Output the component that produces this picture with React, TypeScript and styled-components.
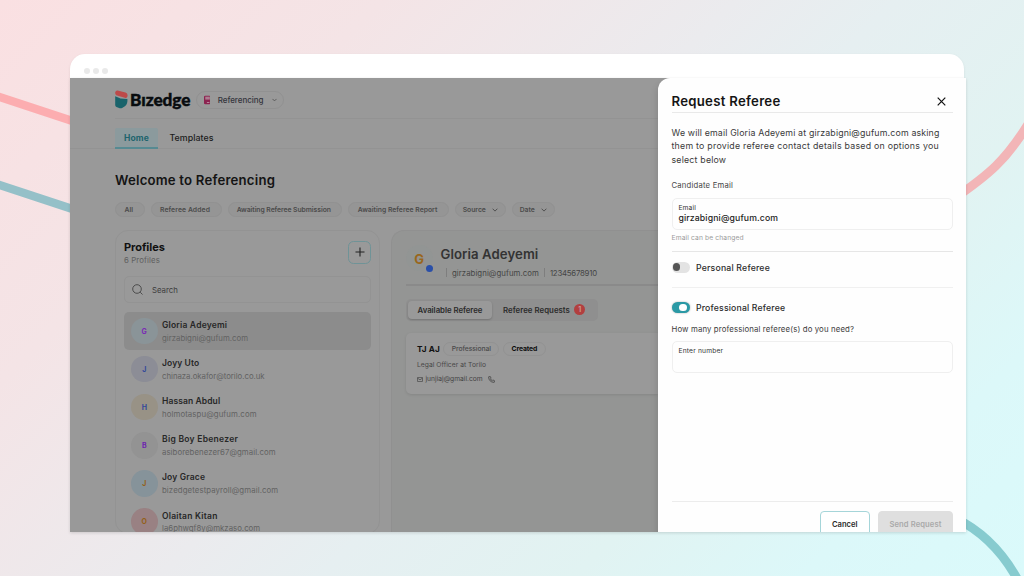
import React from "react";
import styled, { createGlobalStyle, css } from "styled-components";

const GlobalStyle = createGlobalStyle`
  * { box-sizing: border-box; }
  body { margin: 0; overflow: hidden; }
`;

const Page = styled.div`
  position: relative;
  width: 1024px;
  height: 576px;
  overflow: hidden;
  padding: 54px 0 0 70px;
  font-family: Inter, "Liberation Sans", sans-serif;
  background: linear-gradient(135deg, #fae0e2 0%, #f4e4e6 24%, #ebebee 46%, #e6eff1 56%, #e1f3f2 72%, #dcf8f9 86%, #dafafb 100%);
`;

const Ribbons = styled.svg`
  position: absolute;
  inset: 0;
`;

const Browser = styled.div`
  position: relative;
  width: 896px;
`;

const TitleBar = styled.div`
  width: 894px;
  height: 23.5px;
  padding: 14px 0 0 14px;
  display: flex;
  gap: 3px;
  background: #fff;
  border-radius: 15px 15px 0 0;
  box-shadow: 0 1px 3px rgba(0, 0, 0, 0.08);
`;

const WindowDot = styled.i`
  width: 6px;
  height: 6px;
  border-radius: 50%;
  background: #e9e9e9;
`;

const Screen = styled.div`
  position: relative;
  display: flex;
  height: 454px;
  overflow: hidden;
  background: #999;
`;

const Shadow = styled.div`
  box-shadow: 0 1px 3px rgba(0, 0, 0, 0.14);
`;

const Main = styled.main`
  width: 588px;
  overflow: hidden;
`;

interface TextProps {
  $size: number;
  $h: number;
  $weight?: number;
  $color?: string;
  $ls?: number;
}

const Text = styled.div<TextProps>`
  flex: none;
  white-space: nowrap;
  font-size: ${(p) => p.$size}px;
  line-height: ${(p) => p.$h}px;
  font-weight: ${(p) => p.$weight ?? 400};
  color: ${(p) => p.$color ?? "#3a3a3a"};
  letter-spacing: ${(p) => p.$ls ?? 0}px;
`;

const Header = styled.header`
  display: flex;
  align-items: center;
  height: 41px;
  margin-left: 45px;
  padding-top: 4px;
  border-bottom: 1px solid #939393;
`;

const Wordmark = styled.div`
  width: 61.5px;
  margin-left: 2px;
  font-family: Lato, sans-serif;
  font-weight: 900;
  font-size: 17.2px;
  line-height: 20px;
  letter-spacing: -0.05px;
  color: #080c0f;
  -webkit-text-stroke: 0.4px #080c0f;
`;

const AppSwitch = styled.div`
  display: flex;
  align-items: center;
  width: 88px;
  height: 18px;
  margin-left: 4px;
  padding: 0 6px 0 7px;
  border: 1px solid #919191;
  border-radius: 9px;
`;

const AppName = styled(Text)`
  margin: 0 8px 0 7.5px;
`;

const Tabs = styled.nav`
  display: flex;
  height: 30px;
  padding: 9px 0 0 45px;
  border-bottom: 1px solid #939393;
`;

const Tab = styled.div<{ $active?: boolean }>`
  height: 21px;
  ${(p) =>
    p.$active
      ? css`
          width: 43px;
          text-align: center;
          background: #8b9a9d;
          border-bottom: 2px solid #568a92;
          border-radius: 2px 2px 0 0;
        `
      : css`
          padding-left: 11.5px;
        `}
`;

const Content = styled.section`
  padding: 21.5px 0 0 45px;
`;

const Chips = styled.div`
  display: flex;
  gap: 6px;
  margin-top: 12px;
`;

const Chip = styled.div<{ $w: number; $menu?: boolean }>`
  display: flex;
  align-items: center;
  justify-content: center;
  gap: 6.5px;
  width: ${(p) => p.$w}px;
  height: 15px;
  padding-right: ${(p) => (p.$menu ? 0 : 2)}px;
  border-radius: 8px;
  border: 1px solid #919191;
  background: #959595;
`;

const Panels = styled.div`
  display: flex;
  gap: 11px;
  margin-top: 12.5px;
  height: 304px;
`;

const Profiles = styled.div`
  flex: none;
  width: 265px;
  padding: 10px 8px 0 8px;
  border: 1px solid #939393;
  border-radius: 13px;
`;

const ProfilesHead = styled.div`
  display: flex;
  justify-content: space-between;
`;

const AddButton = styled.button`
  display: flex;
  align-items: center;
  justify-content: center;
  width: 23px;
  height: 23px;
  padding: 0;
  background: none;
  border: 1px solid #6f9397;
  border-radius: 5.5px;
`;

const Search = styled.div`
  display: flex;
  align-items: center;
  gap: 9px;
  height: 27px;
  margin: 8.5px 0 9px;
  padding-left: 7px;
  border: 1px solid #939393;
  border-radius: 5px;
`;

const ProfileRow = styled.div<{ $active?: boolean }>`
  display: flex;
  align-items: center;
  gap: 4.5px;
  height: 38.1px;
  padding-left: 7px;
  border-radius: 5px;
  background: ${(p) => (p.$active ? "#8c8c8c" : "transparent")};
`;

const Avatar = styled.div<{ $bg: string; $color: string; $big?: boolean }>`
  position: relative;
  flex: none;
  width: 26.5px;
  height: 26.5px;
  border-radius: 50%;
  text-align: center;
  line-height: 28px;
  font-weight: 700;
  font-size: ${(p) => (p.$big ? 13 : 7)}px;
  background: ${(p) => p.$bg};
  color: ${(p) => p.$color};
`;

const Presence = styled.i`
  position: absolute;
  right: -0.5px;
  bottom: -0.5px;
  width: 7px;
  height: 7px;
  border-radius: 50%;
  background: #2a4fa8;
`;

const RowText = styled.div`
  padding-top: 1px;
`;

const Detail = styled.div`
  flex: 1;
  padding: 14px 0 0 14px;
  border: 1px solid #909090;
  border-right: 0;
  border-radius: 13px 0 0 0;
  background: #949594;
`;

const Person = styled.div`
  display: flex;
  height: 41px;
  border-bottom: 2px solid #8a8a8a;
`;

const PersonInfo = styled.div`
  padding-left: 8px;
`;

const Contacts = styled.div`
  display: flex;
  align-items: center;
  margin: 4px 0 0 5.5px;
`;

const Divider = styled.i`
  width: 1px;
  height: 9px;
  margin-right: 5px;
  background: #7e7e7e;
`;

const Segmented = styled.div`
  display: flex;
  align-items: center;
  width: 191.5px;
  height: 22px;
  margin-top: 13px;
  padding: 0 2px;
  border-radius: 5px;
  background: #8f8f8f;
`;

const Segment = styled.div<{ $active?: boolean }>`
  display: flex;
  align-items: center;
  justify-content: center;
  gap: 4px;
  height: 18px;
  ${(p) =>
    p.$active
      ? css`
          width: 84px;
          border-radius: 4px;
          background: #999;
          box-shadow: 0 1px 2px rgba(0, 0, 0, 0.2);
        `
      : css`
          padding-left: 11px;
        `}
`;

const Count = styled.i`
  width: 11.5px;
  height: 11.5px;
  border-radius: 50%;
  background: #b23f3f;
  color: #cfa0a0;
  font-style: normal;
  font-weight: 600;
  font-size: 7px;
  line-height: 11.5px;
  text-align: center;
`;

const RefereeCard = styled.div`
  height: 61px;
  margin-top: 12.5px;
  padding: 8px 0 0 11px;
  border-radius: 5px 0 0 5px;
  background: #999;
  box-shadow: 0 1px 3px rgba(0, 0, 0, 0.1);
`;

const CardRow = styled.div`
  display: flex;
  align-items: center;
`;

const CardMail = styled(Text)`
  margin: 0 5px 0 2.5px;
`;

const Tag = styled.div<{ $w: number }>`
  display: flex;
  align-items: center;
  justify-content: center;
  width: ${(p) => p.$w}px;
  height: 14px;
  margin-left: 3.5px;
  border: 1px solid #929292;
  border-radius: 7px;
`;

const Drawer = styled.aside`
  width: 308px;
  height: 454px;
  padding: 14px 13px 0 13.5px;
  background: #fefefe;
  border-radius: 12px 0 0 0;
  box-shadow: -2px 4px 6px rgba(0, 0, 0, 0.1);
`;

const DrawerHead = styled.div`
  display: flex;
  justify-content: space-between;
  align-items: center;
  height: 21px;
  padding: 0 7px 1px 0;
  border-bottom: 1px solid #e9e9e9;
`;

const Copy = styled.div`
  margin: 13px 0 13px;
`;

const Field = styled.div<{ $mt: number }>`
  height: 32px;
  margin-top: ${(p) => p.$mt}px;
  padding: 4px 0 0 6px;
  border: 1px solid #efefef;
  border-radius: 5px;
`;

const SwitchRow = styled.div<{ $h: number; $line?: string; $pt: number; $mt?: number }>`
  display: flex;
  gap: 6.5px;
  height: ${(p) => p.$h}px;
  margin-top: ${(p) => p.$mt ?? 0}px;
  padding-top: ${(p) => p.$pt}px;
  border-top: 1px solid ${(p) => p.$line};
`;

const Switch = styled.div<{ $on?: boolean }>`
  display: flex;
  align-items: center;
  justify-content: ${(p) => (p.$on ? "flex-end" : "flex-start")};
  width: 18px;
  height: 11px;
  padding: 0 ${(p) => (p.$on ? 3 : 1)}px;
  border-radius: 6px;
  background: ${(p) => (p.$on ? "#2a99a5" : "#e3e3e3")};
  box-shadow: ${(p) => (p.$on ? "0 0 2px rgba(0,0,0,.35)" : "none")};

  &::after {
    content: "";
    width: 7.5px;
    height: 7.5px;
    border-radius: 50%;
    background: ${(p) => (p.$on ? "#fff" : "#555")};
  }
`;

const Footer = styled.footer`
  display: flex;
  justify-content: flex-end;
  gap: 8.5px;
  margin-top: 128px;
  padding-top: 9px;
  border-top: 1px solid #ececec;
`;

const Button = styled.button<{ $disabled?: boolean }>`
  width: ${(p) => (p.$disabled ? 75 : 49.5)}px;
  height: 27px;
  padding: 0;
  font-family: inherit;
  border-radius: 4px;
  border: 1px solid ${(p) => (p.$disabled ? "#dfdfdf" : "#a5d5d9")};
  background: ${(p) => (p.$disabled ? "#dfdfdf" : "#fff")};
`;

const Chevron = ({ color = "#4a4a4a" }: { color?: string }) => (
  <svg width="6" height="4" viewBox="0 0 6 4" fill="none" stroke={color} strokeWidth="0.9">
    <path d="M0.6 0.7 3 3.1 5.4 0.7" />
  </svg>
);

const people = [
  { name: "Gloria Adeyemi", mail: "girzabigni@gufum.com", bg: "#8a9498", fg: "#7a2bb5", nls: 0.2, mls: 0.02 },
  { name: "Joyy Uto", mail: "chinaza.okafor@torilo.co.uk", bg: "#8c8d96", fg: "#33489a", nls: 0.1, mls: -0.02 },
  { name: "Hassan Abdul", mail: "holmotaspu@gufum.com", bg: "#989286", fg: "#33489a", nls: 0.1, mls: 0.1 },
  { name: "Big Boy Ebenezer", mail: "asiborebenezer67@gmail.com", bg: "#939393", fg: "#6d23b0", nls: 0.28, mls: 0.06 },
  { name: "Joy Grace", mail: "bizedgetestpayroll@gmail.com", bg: "#86939a", fg: "#946019", nls: 0.17, mls: 0.1 },
  { name: "Olaitan Kitan", mail: "la6phwqf8y@mkzaso.com", bg: "#998183", fg: "#946019", nls: 0.24, mls: 0.01 },
];

const chips = [
  { label: "All", w: 29.5, ls: 0 },
  { label: "Referee Added", w: 71, ls: 0.1 },
  { label: "Awaiting Referee Submission", w: 114.5, ls: -0.05 },
  { label: "Awaiting Referee Report", w: 101, ls: 0.02 },
  { label: "Source", w: 51, ls: 0, menu: true },
  { label: "Date", w: 43, ls: 0, menu: true },
];

export default function App() {
  return (
    <Page>
      <GlobalStyle />
      <Ribbons width="1024" height="576" fill="none">
        <path d="M-5 95.500 80 123.500" stroke="#fcadb0" strokeWidth="8.500" />
        <path d="M-5 183.500 80 211.500" stroke="#95c0c8" strokeWidth="8.500" />
        <path d="M955 198C988 175 1006 161 1030 121" stroke="#f2b5b7" strokeWidth="9" />
        <path d="M955 518C982 531 1004 553 1020 584" stroke="#87cbcf" strokeWidth="9" />
      </Ribbons>
      <Browser>
        <TitleBar>
          <WindowDot />
          <WindowDot />
          <WindowDot />
        </TitleBar>
        <Shadow>
          <Screen>
            <Main>
              <Header>
                <svg width="13" height="19" viewBox="0 0 13 19">
                  <path d="M0.200 6.200 5.500 8.600 12.400 8.900Q12.900 13.500 9.900 16.300L7.100 18Q5.600 18.500 4 18L1.500 17.100Q0.200 16.500 0.200 14.900Z" fill="#19636b" />
                  <path d="M0.300 2Q0.800 0.300 2.500 0.500L10.500 2.500Q13.200 3.500 12.400 6.600Q12 8.200 10.500 7.900L1.300 5.300Q-0.200 4.300 0.300 2Z" fill="#bd4a4a" />
                </svg>
                <Wordmark>Bızedge</Wordmark>
                <AppSwitch>
                  <svg width="8" height="10" viewBox="0 0 8 10">
                    <rect width="8" height="10" rx="1.500" fill="#8c2350" />
                    <rect x="1.500" y="1" width="5.500" height="3.500" fill="#ad7d90" />
                    <path d="M3.500 8H6.500" stroke="#c199aa" strokeWidth="1" />
                  </svg>
                  <AppName as="span" $size={8} $h={16} $weight={500} $color="#34343c" $ls={-0.03}>
                    Referencing
                  </AppName>
                  <Chevron />
                </AppSwitch>
              </Header>
              <Tabs>
                <Tab $active>
                  <Text $size={8.5} $h={20} $weight={700} $color="#20646d" $ls={0.2}>Home</Text>
                </Tab>
                <Tab>
                  <Text $size={8.8} $h={20} $weight={500} $color="#1b1b1b" $ls={0.05}>Templates</Text>
                </Tab>
              </Tabs>
              <Content>
                <Text $size={13.2} $h={20} $weight={600} $color="#141414" $ls={0.2}>Welcome to Referencing</Text>
                <Chips>
                  {chips.map((c) => (
                    <Chip key={c.label} $w={c.w} $menu={c.menu}>
                      <Text $size={6.8} $h={13} $weight={600} $color="#4b4b4b" $ls={c.ls}>{c.label}</Text>
                      {c.menu && <Chevron />}
                    </Chip>
                  ))}
                </Chips>
                <Panels>
                  <Profiles>
                    <ProfilesHead>
                      <div>
                        <Text $size={11} $h={12} $weight={700} $color="#111" $ls={-0.05}>Profiles</Text>
                        <Text $size={7.8} $h={15} $color="#5f5f5f" $ls={0.12}>6 Profiles</Text>
                      </div>
                      <AddButton>
                        <svg width="10" height="10" viewBox="0 0 10 10" stroke="#222" strokeWidth="1.100">
                          <path d="M5 0.500V9.500M0.500 5H9.500" />
                        </svg>
                      </AddButton>
                    </ProfilesHead>
                    <Search>
                      <svg width="11" height="11" viewBox="0 0 11 11" fill="none" stroke="#444" strokeWidth="0.900">
                        <circle cx="5" cy="5" r="4.300" />
                        <path d="M8.200 8.200 10.500 10.500" />
                      </svg>
                      <Text $size={7.8} $h={14} $color="#3d3d3d">Search</Text>
                    </Search>
                    {people.map((p, i) => (
                      <ProfileRow key={p.mail} $active={i === 0}>
                        <Avatar $bg={p.bg} $color={p.fg}>{p.name[0]}</Avatar>
                        <RowText>
                          <Text $size={8.5} $h={12.5} $weight={600} $color="#272727" $ls={p.nls}>{p.name}</Text>
                          <Text $size={7.8} $h={12.5} $color="#626262" $ls={p.mls}>{p.mail}</Text>
                        </RowText>
                      </ProfileRow>
                    ))}
                  </Profiles>
                  <Detail>
                    <Person>
                      <Avatar $bg="#929594" $color="#99671d" $big>
                        G
                        <Presence />
                      </Avatar>
                      <PersonInfo>
                        <Text $size={13.2} $h={18} $weight={600} $color="#333" $ls={0.07}>Gloria Adeyemi</Text>
                        <Contacts>
                          <Divider />
                          <Text $size={7.8} $h={12} $color="#454545" $ls={0.06}>girzabigni@gufum.com</Text>
                          <Divider style={{ marginLeft: 5 }} />
                          <Text $size={7.8} $h={12} $color="#454545" $ls={-0.22}>12345678910</Text>
                        </Contacts>
                      </PersonInfo>
                    </Person>
                    <Segmented>
                      <Segment $active>
                        <Text $size={7.8} $h={18} $weight={600} $color="#2b2b2b" $ls={-0.03}>Available Referee</Text>
                      </Segment>
                      <Segment>
                        <Text $size={7.8} $h={18} $weight={600} $color="#2b2b2b" $ls={0.04}>Referee Requests</Text>
                        <Count>1</Count>
                      </Segment>
                    </Segmented>
                    <RefereeCard>
                      <CardRow>
                        <Text $size={8.2} $h={16} $weight={700} $color="#111" $ls={0.1}>TJ AJ</Text>
                        <Tag $w={56}>
                          <Text $size={6.8} $h={12} $weight={500} $color="#4b4b4b" $ls={-0.08}>Professional</Text>
                        </Tag>
                        <Tag $w={43}>
                          <Text $size={6.8} $h={12} $weight={700} $color="#0c0c0c" $ls={-0.1}>Created</Text>
                        </Tag>
                      </CardRow>
                      <Text $size={6.7} $h={16} $color="#484848" $ls={0.04}>Legal Officer at Torilo</Text>
                      <CardRow>
                        <svg width="6" height="5" viewBox="0 0 6 5" fill="none" stroke="#444" strokeWidth="0.700">
                          <rect x="0.400" y="0.400" width="5.200" height="4.200" rx="0.600" />
                          <path d="M0.600 1.200 3 2.800 5.400 1.200" />
                        </svg>
                        <CardMail $size={6.7} $h={12} $color="#444">junjiaj@gmail.com</CardMail>
                        <svg width="7" height="7" viewBox="0 0 24 24" fill="none" stroke="#3d3d3d" strokeWidth="2.600">
                          <path d="M22 16.900v3a2 2 0 0 1-2.200 2 19.800 19.800 0 0 1-17.700-17.700A2 2 0 0 1 4.100 2h3a2 2 0 0 1 2 1.700l.9 3a2 2 0 0 1-.5 2.100L8.100 9.900a16 16 0 0 0 6 6l1.300-1.300a2 2 0 0 1 2.100-.5l2.800.7a2 2 0 0 1 1.700 2.100Z" />
                        </svg>
                      </CardRow>
                    </RefereeCard>
                  </Detail>
                </Panels>
              </Content>
            </Main>
            <Drawer>
              <DrawerHead>
                <Text $size={13.2} $h={18} $weight={600} $color="#151515" $ls={0.27}>Request Referee</Text>
                <svg width="9" height="9" viewBox="0 0 9 9" stroke="#111" strokeWidth="1.200">
                  <path d="M0.700 0.700 8.300 8.300M8.300 0.700 0.700 8.300" />
                </svg>
              </DrawerHead>
              <Copy>
                <Text $size={8.8} $h={13.5} $ls={0.16}>We will email Gloria Adeyemi at girzabigni@gufum.com asking</Text>
                <Text $size={8.8} $h={13.5} $ls={0.24}>them to provide referee contact details based on options you</Text>
                <Text $size={8.8} $h={13.5} $ls={0.2}>select below</Text>
              </Copy>
              <Text $size={7.7} $h={14} $color="#444" $ls={0.2}>Candidate Email</Text>
              <Field $mt={4.5}>
                <Text $size={6.7} $h={10} $color="#333" $ls={0.1}>Email</Text>
                <Text $size={8.7} $h={11} $weight={500} $color="#1c1c1c" $ls={0.13}>girzabigni@gufum.com</Text>
              </Field>
              <Text $size={6.7} $h={16} $color="#9b9b9b" $ls={0.13}>Email can be changed</Text>
              <SwitchRow $h={36.5} $pt={10} $mt={5} $line="#e6e6e6">
                <Switch />
                <Text $size={8.7} $h={12} $weight={500} $color="#2b2b2b" $ls={0.2}>Personal Referee</Text>
              </SwitchRow>
              <SwitchRow $h={35} $pt={14} $line="#f0f0f0">
                <Switch $on />
                <Text $size={8.7} $h={12} $weight={500} $color="#2b2b2b" $ls={0.17}>Professional Referee</Text>
              </SwitchRow>
              <Text $size={7.8} $h={14} $color="#3c3c3c" $ls={0.13}>How many professional referee(s) do you need?</Text>
              <Field $mt={4.5}>
                <Text $size={6.7} $h={10} $color="#333" $ls={0.17}>Enter number</Text>
              </Field>
              <Footer>
                <Button>
                  <Text as="span" $size={7.6} $h={25} $weight={600} $color="#2b2b2b">Cancel</Text>
                </Button>
                <Button $disabled>
                  <Text as="span" $size={7.6} $h={25} $weight={600} $color="#a9a9a9" $ls={0.1}>Send Request</Text>
                </Button>
              </Footer>
            </Drawer>
          </Screen>
        </Shadow>
      </Browser>
    </Page>
  );
}
